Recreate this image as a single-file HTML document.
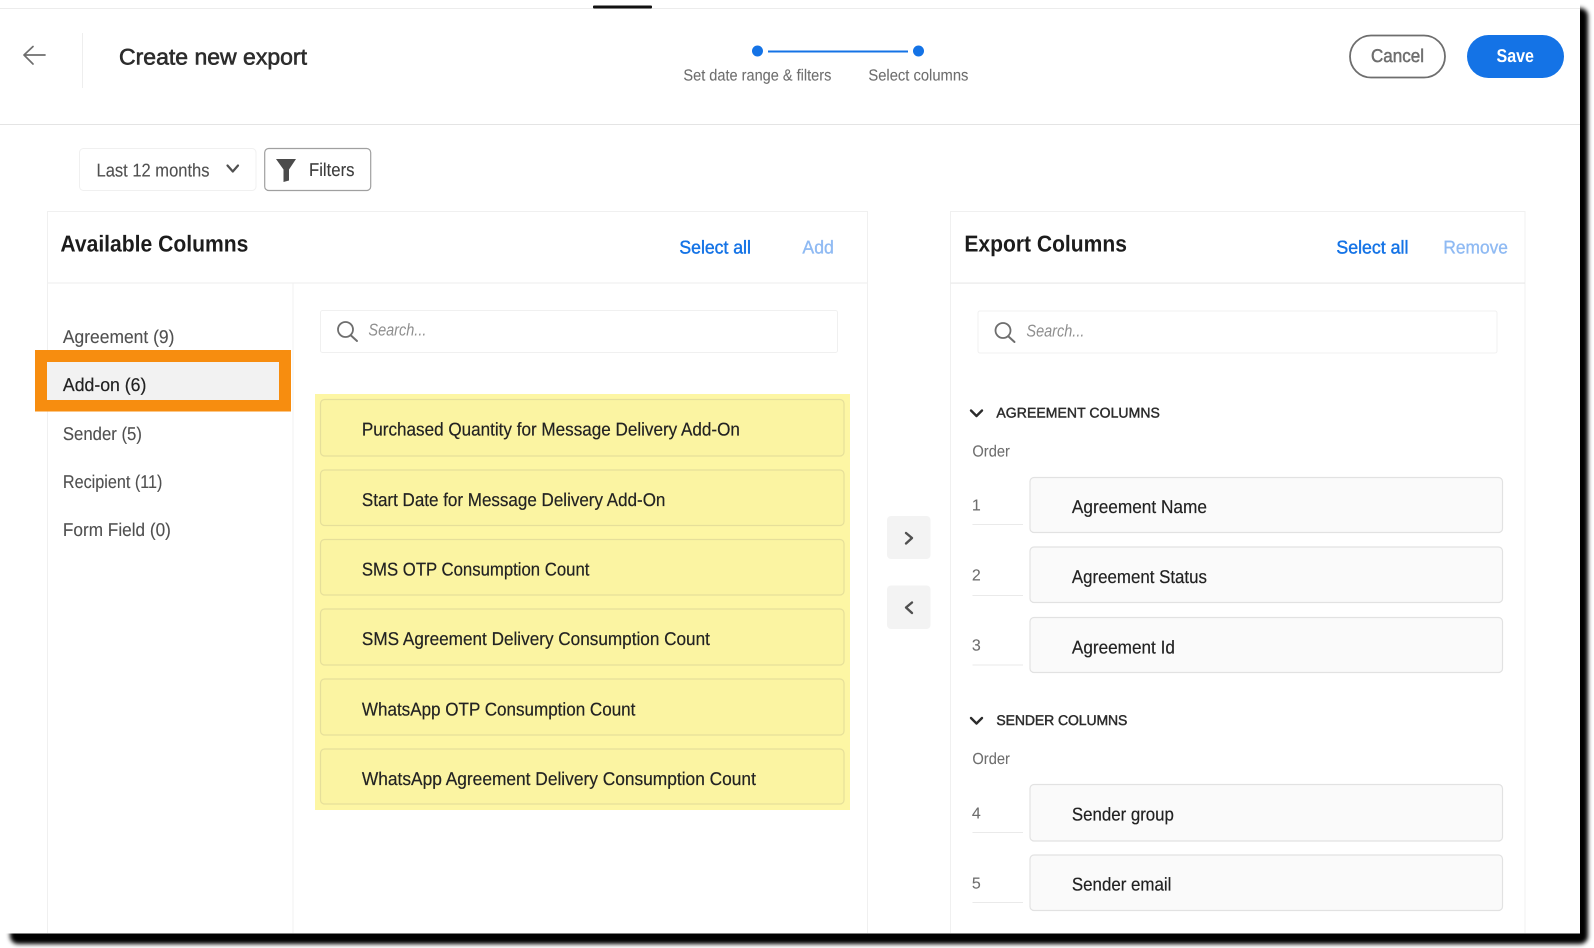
<!DOCTYPE html>
<html><head><meta charset="utf-8"><title>Create new export</title>
<style>
html,body{margin:0;padding:0;background:#fff;width:1594px;height:948px;overflow:hidden}
svg{display:block}
text{font-family:"Liberation Sans",sans-serif;text-rendering:geometricPrecision}
.n,.c,.s,.h,.l,.d,.u,.q{transform:translate(-.6px,-.8px)}
.n{font-size:18.5px;fill:#505050;stroke:#505050;stroke-width:.12}
.c{font-size:18.5px;fill:#222;stroke:#222;stroke-width:.2}
.s{font-size:16px;fill:#6e6e6e;stroke:#6e6e6e;stroke-width:.08}
.h{font-size:23px;font-weight:700;fill:#1c1c1c}
.l{font-size:18.5px;fill:#1473e6;stroke:#1473e6;stroke-width:.45}
.d{font-size:18.5px;fill:#8fbaf3;stroke:#8fbaf3;stroke-width:.35}
.u{font-size:14px;fill:#2c2c2c;stroke:#2c2c2c;stroke-width:.45}
.q{font-size:17px;font-style:italic;fill:#8e8e8e}
.i{fill:none;stroke-linecap:round;stroke-linejoin:round}
</style></head><body>
<svg width="1594" height="948" viewBox="0 0 1594 948" xmlns="http://www.w3.org/2000/svg">
<defs><filter id="b" x="-2%" y="-2%" width="104%" height="104%"><feGaussianBlur stdDeviation="2"/></filter></defs>
<rect width="1594" height="948" fill="#fff"/>
<rect x="10" y="8" width="1578" height="936" rx="8" fill="#000" filter="url(#b)"/>
<rect x="0" y="0" width="1580" height="933.5" fill="#fff"/>

<!-- top bar -->
<rect x="0" y="8" width="1580" height="1" fill="#ececec"/>
<rect x="593" y="5.5" width="59" height="3" rx="1" fill="#111"/>
<path class="i" d="M45 55H24M33 46.500L24 55L33 64" stroke="#6e6e6e" stroke-width="1.700"/>
<rect x="82" y="33" width="1" height="55" fill="#eeeeee"/>
<text x="119" y="64.500" font-size="22.500" fill="#2c2c2c" stroke="#2c2c2c" stroke-width=".6" textLength="188" lengthAdjust="spacingAndGlyphs">Create new export</text>

<!-- stepper -->
<circle cx="757.500" cy="51" r="5.500" fill="#1473e6"/>
<circle cx="918.500" cy="51" r="5.500" fill="#1473e6"/>
<rect x="768" y="50.500" width="140" height="2" fill="#1473e6"/>
<text class="s" x="684" y="81.500" textLength="148" lengthAdjust="spacingAndGlyphs">Set date range &amp; filters</text>
<text class="s" x="869" y="81.500" textLength="100" lengthAdjust="spacingAndGlyphs">Select columns</text>

<!-- action buttons -->
<rect x="1350" y="35.500" width="95" height="42" rx="21" fill="#fff" stroke="#6e6e6e" stroke-width="1.800"/>
<text x="1371" y="62" font-size="18.500" fill="#6e6e6e" stroke="#6e6e6e" stroke-width=".5" textLength="53" lengthAdjust="spacingAndGlyphs">Cancel</text>
<rect x="1467" y="35" width="97" height="43" rx="21.500" fill="#1473e6"/>
<text x="1496.500" y="62" font-size="18.500" font-weight="700" fill="#fff" textLength="37.500" lengthAdjust="spacingAndGlyphs">Save</text>
<rect x="0" y="124" width="1580" height="1" fill="#e4e4e4"/>

<!-- filters row -->
<rect x="79.500" y="148.500" width="176.500" height="42" rx="4" fill="#fff" stroke="#f0f0f0"/>
<text x="96.500" y="176.500" font-size="18.500" fill="#505050" stroke="#505050" stroke-width=".12" textLength="113" lengthAdjust="spacingAndGlyphs">Last 12 months</text>
<path class="i" d="M227.500 165.500L232.800 171.500L238 165.500" stroke="#505050" stroke-width="2.200"/>
<rect x="264.700" y="148.500" width="106" height="42" rx="4" fill="#fff" stroke="#a0a0a0" stroke-width="1.200"/>
<path d="M276 159H296L289 169.500V180.500L283.500 182V169.500Z" fill="#4b4b4b"/>
<text x="309" y="176" font-size="18.500" fill="#3c3c3c" stroke="#3c3c3c" stroke-width=".12" textLength="45.500" lengthAdjust="spacingAndGlyphs">Filters</text>

<!-- available panel -->
<path d="M47.500 933V211.500H867.500V933" fill="none" stroke="#f0f0f0"/>
<rect x="47.500" y="282.500" width="820" height="1" fill="#eeeeee"/>
<rect x="292.500" y="283" width="1" height="650" fill="#f0f0f0"/>
<text class="h" x="61" y="252.500" textLength="188" lengthAdjust="spacingAndGlyphs">Available Columns</text>
<text class="l" x="680" y="254.500" textLength="71.500" lengthAdjust="spacingAndGlyphs">Select all</text>
<text class="d" x="803" y="254.500" textLength="31.500" lengthAdjust="spacingAndGlyphs">Add</text>

<!-- left nav -->
<text class="n" x="63.500" y="344" textLength="111.500" lengthAdjust="spacingAndGlyphs">Agreement (9)</text>
<rect x="35" y="350" width="256" height="61.500" fill="#f78d0f"/>
<rect x="47" y="362" width="232" height="38" fill="#f2f2f2"/>
<text class="c" x="63.500" y="392" textLength="83.500" lengthAdjust="spacingAndGlyphs">Add-on (6)</text>
<text class="n" x="63.500" y="441" textLength="79" lengthAdjust="spacingAndGlyphs">Sender (5)</text>
<text class="n" x="63.500" y="489" textLength="99.500" lengthAdjust="spacingAndGlyphs">Recipient (11)</text>
<text class="n" x="63.500" y="537" textLength="108" lengthAdjust="spacingAndGlyphs">Form Field (0)</text>

<!-- left search -->
<rect x="320.500" y="310.500" width="517" height="42" rx="2" fill="#fff" stroke="#f0f0f0"/>
<circle cx="345.500" cy="329.500" r="7.500" fill="none" stroke="#6e6e6e" stroke-width="1.800"/>
<path class="i" d="M351 335.500L357 341" stroke="#6e6e6e" stroke-width="2"/>
<text class="q" x="369" y="336.500" textLength="58" lengthAdjust="spacingAndGlyphs">Search...</text>

<!-- yellow list -->
<rect x="315" y="394" width="535" height="416" fill="#fdf6a4"/>
<g fill="#fbf4a2" stroke="#e6df9a" stroke-width="1.200">
<rect x="320.500" y="399.500" width="523.500" height="56.500" rx="4"/>
<rect x="320.500" y="470" width="523.500" height="55.500" rx="4"/>
<rect x="320.500" y="539.500" width="523.500" height="55.500" rx="4"/>
<rect x="320.500" y="609" width="523.500" height="56" rx="4"/>
<rect x="320.500" y="679" width="523.500" height="56" rx="4"/>
<rect x="320.500" y="749" width="523.500" height="55" rx="4"/>
</g>
<text class="c" x="362.500" y="436.500" textLength="378" lengthAdjust="spacingAndGlyphs">Purchased Quantity for Message Delivery Add-On</text>
<text class="c" x="362.500" y="507" textLength="303.500" lengthAdjust="spacingAndGlyphs">Start Date for Message Delivery Add-On</text>
<text class="c" x="362.500" y="576.500" textLength="227.500" lengthAdjust="spacingAndGlyphs">SMS OTP Consumption Count</text>
<text class="c" x="362.500" y="646" textLength="348" lengthAdjust="spacingAndGlyphs">SMS Agreement Delivery Consumption Count</text>
<text class="c" x="362.500" y="716.500" textLength="273.500" lengthAdjust="spacingAndGlyphs">WhatsApp OTP Consumption Count</text>
<text class="c" x="362.500" y="786" textLength="394" lengthAdjust="spacingAndGlyphs">WhatsApp Agreement Delivery Consumption Count</text>

<!-- arrows -->
<rect x="887" y="516" width="43.500" height="43" rx="4" fill="#f3f3f3"/>
<rect x="887" y="585.500" width="43.500" height="43.500" rx="4" fill="#f3f3f3"/>
<path class="i" d="M906 533L912 538L906 543.500" stroke="#505050" stroke-width="2.400"/>
<path class="i" d="M912 602.500L906 607.500L912 613" stroke="#505050" stroke-width="2.400"/>

<!-- export panel -->
<path d="M950.500 933V211.500H1525V933" fill="none" stroke="#f0f0f0"/>
<rect x="950.500" y="282.500" width="574.500" height="1.200" fill="#e9e9e9"/>
<text class="h" x="965" y="252.500" textLength="162.500" lengthAdjust="spacingAndGlyphs">Export Columns</text>
<text class="l" x="1337" y="254.500" textLength="72" lengthAdjust="spacingAndGlyphs">Select all</text>
<text class="d" x="1444" y="254.500" textLength="64.500" lengthAdjust="spacingAndGlyphs">Remove</text>

<!-- right search -->
<rect x="978" y="311" width="519" height="42" rx="2" fill="#fff" stroke="#f0f0f0"/>
<circle cx="1003" cy="330.500" r="7.500" fill="none" stroke="#6e6e6e" stroke-width="1.800"/>
<path class="i" d="M1008.500 336.500L1014.500 342" stroke="#6e6e6e" stroke-width="2"/>
<text class="q" x="1027" y="337.500" textLength="58" lengthAdjust="spacingAndGlyphs">Search...</text>

<!-- agreement columns -->
<path class="i" d="M971 410.500L976.500 416L982 410.500" stroke="#2c2c2c" stroke-width="2.400"/>
<text class="u" x="997" y="418.500" textLength="163.500" lengthAdjust="spacing">AGREEMENT COLUMNS</text>
<text class="s" x="973" y="457.500" textLength="37.500" lengthAdjust="spacingAndGlyphs">Order</text>
<g fill="#fafafa" stroke="#e2e2e2" stroke-width="1.200">
<rect x="1030" y="477.500" width="472.500" height="55" rx="4"/>
<rect x="1030" y="547" width="472.500" height="55.500" rx="4"/>
<rect x="1030" y="617.500" width="472.500" height="55" rx="4"/>
<rect x="1030" y="784.500" width="472.500" height="56.500" rx="4"/>
<rect x="1030" y="855" width="472.500" height="55.500" rx="4"/>
</g>
<g fill="#eaeaea">
<rect x="972.500" y="524" width="50.500" height="1"/>
<rect x="972.500" y="595" width="50.500" height="1"/>
<rect x="972.500" y="664.500" width="50.500" height="1"/>
<rect x="972.500" y="832" width="50.500" height="1"/>
<rect x="972.500" y="902" width="50.500" height="1"/>
</g>
<text class="s" x="972.500" y="511.500" font-size="17">1</text>
<text class="s" x="972.500" y="581.500" font-size="17">2</text>
<text class="s" x="972.500" y="651.500" font-size="17">3</text>
<text class="s" x="972.500" y="819.500" font-size="17">4</text>
<text class="s" x="972.500" y="889.500" font-size="17">5</text>
<text class="c" x="1072.500" y="514" textLength="135" lengthAdjust="spacingAndGlyphs">Agreement Name</text>
<text class="c" x="1072.500" y="584" textLength="135" lengthAdjust="spacingAndGlyphs">Agreement Status</text>
<text class="c" x="1072.500" y="654.500" textLength="103" lengthAdjust="spacingAndGlyphs">Agreement Id</text>

<!-- sender columns -->
<path class="i" d="M971 718L976.500 723.500L982 718" stroke="#2c2c2c" stroke-width="2.400"/>
<text class="u" x="997" y="726" textLength="131" lengthAdjust="spacing">SENDER COLUMNS</text>
<text class="s" x="973" y="765" textLength="37.500" lengthAdjust="spacingAndGlyphs">Order</text>
<text class="c" x="1072.500" y="821.500" textLength="102" lengthAdjust="spacingAndGlyphs">Sender group</text>
<text class="c" x="1072.500" y="891.500" textLength="99.500" lengthAdjust="spacingAndGlyphs">Sender email</text>
</svg>
</body></html>
